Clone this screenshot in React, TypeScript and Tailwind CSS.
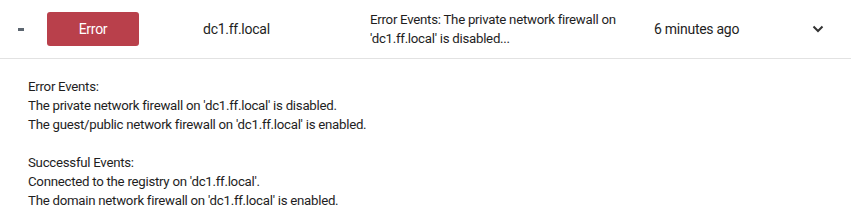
import React from 'react';

const errorEvents = [
  "The private network firewall on 'dc1.ff.local' is disabled.",
  "The guest/public network firewall on 'dc1.ff.local' is enabled.",
];

const successEvents = [
  "Connected to the registry on 'dc1.ff.local'.",
  "The domain network firewall on 'dc1.ff.local' is enabled.",
];

const App: React.FC = () => {
  return (
    <div className="w-[851px] h-[220px] bg-white text-[#1e1e1e] text-[13.25px] tracking-[-0.02em] overflow-hidden" style={{ fontFamily: 'Roboto, sans-serif' }}>
      {/* Summary row */}
      <div className="flex items-center h-[59px] border-b border-[#e2e2e2]">
        <div className="w-[47px] pl-[18px]">
          <div className="w-[6px] h-[3px] bg-[#5c6670]" />
        </div>
        <div className="w-[92px] h-[34px] rounded-[3px] bg-[#b9404b] text-white text-[14px] flex items-center justify-center">Error</div>
        <div className="w-[64px]" />
        <div className="w-[167px] text-[14px]">dc1.ff.local</div>
        <div className="w-[284px] leading-[19px] pr-[30px]">
          Error Events: The private network firewall on 'dc1.ff.local' is disabled...
        </div>
        <div className="w-[158px] text-[14px]">6 minutes ago</div>
        <svg width="12" height="8" viewBox="0 0 12 8" className="text-[#333]">
          <path d="M1.5 1.5 L6 6 L10.5 1.5" fill="none" stroke="currentColor" strokeWidth="2" />
        </svg>
      </div>

      {/* Expanded details */}
      <div className="pl-[28px] pt-[18px] leading-[19px]">
        <div>Error Events:</div>
        {errorEvents.map((e) => (
          <div key={e}>{e}</div>
        ))}
        <div className="h-[19px]" />
        <div>Successful Events:</div>
        {successEvents.map((e) => (
          <div key={e}>{e}</div>
        ))}
      </div>
    </div>
  );
};

export default App;
